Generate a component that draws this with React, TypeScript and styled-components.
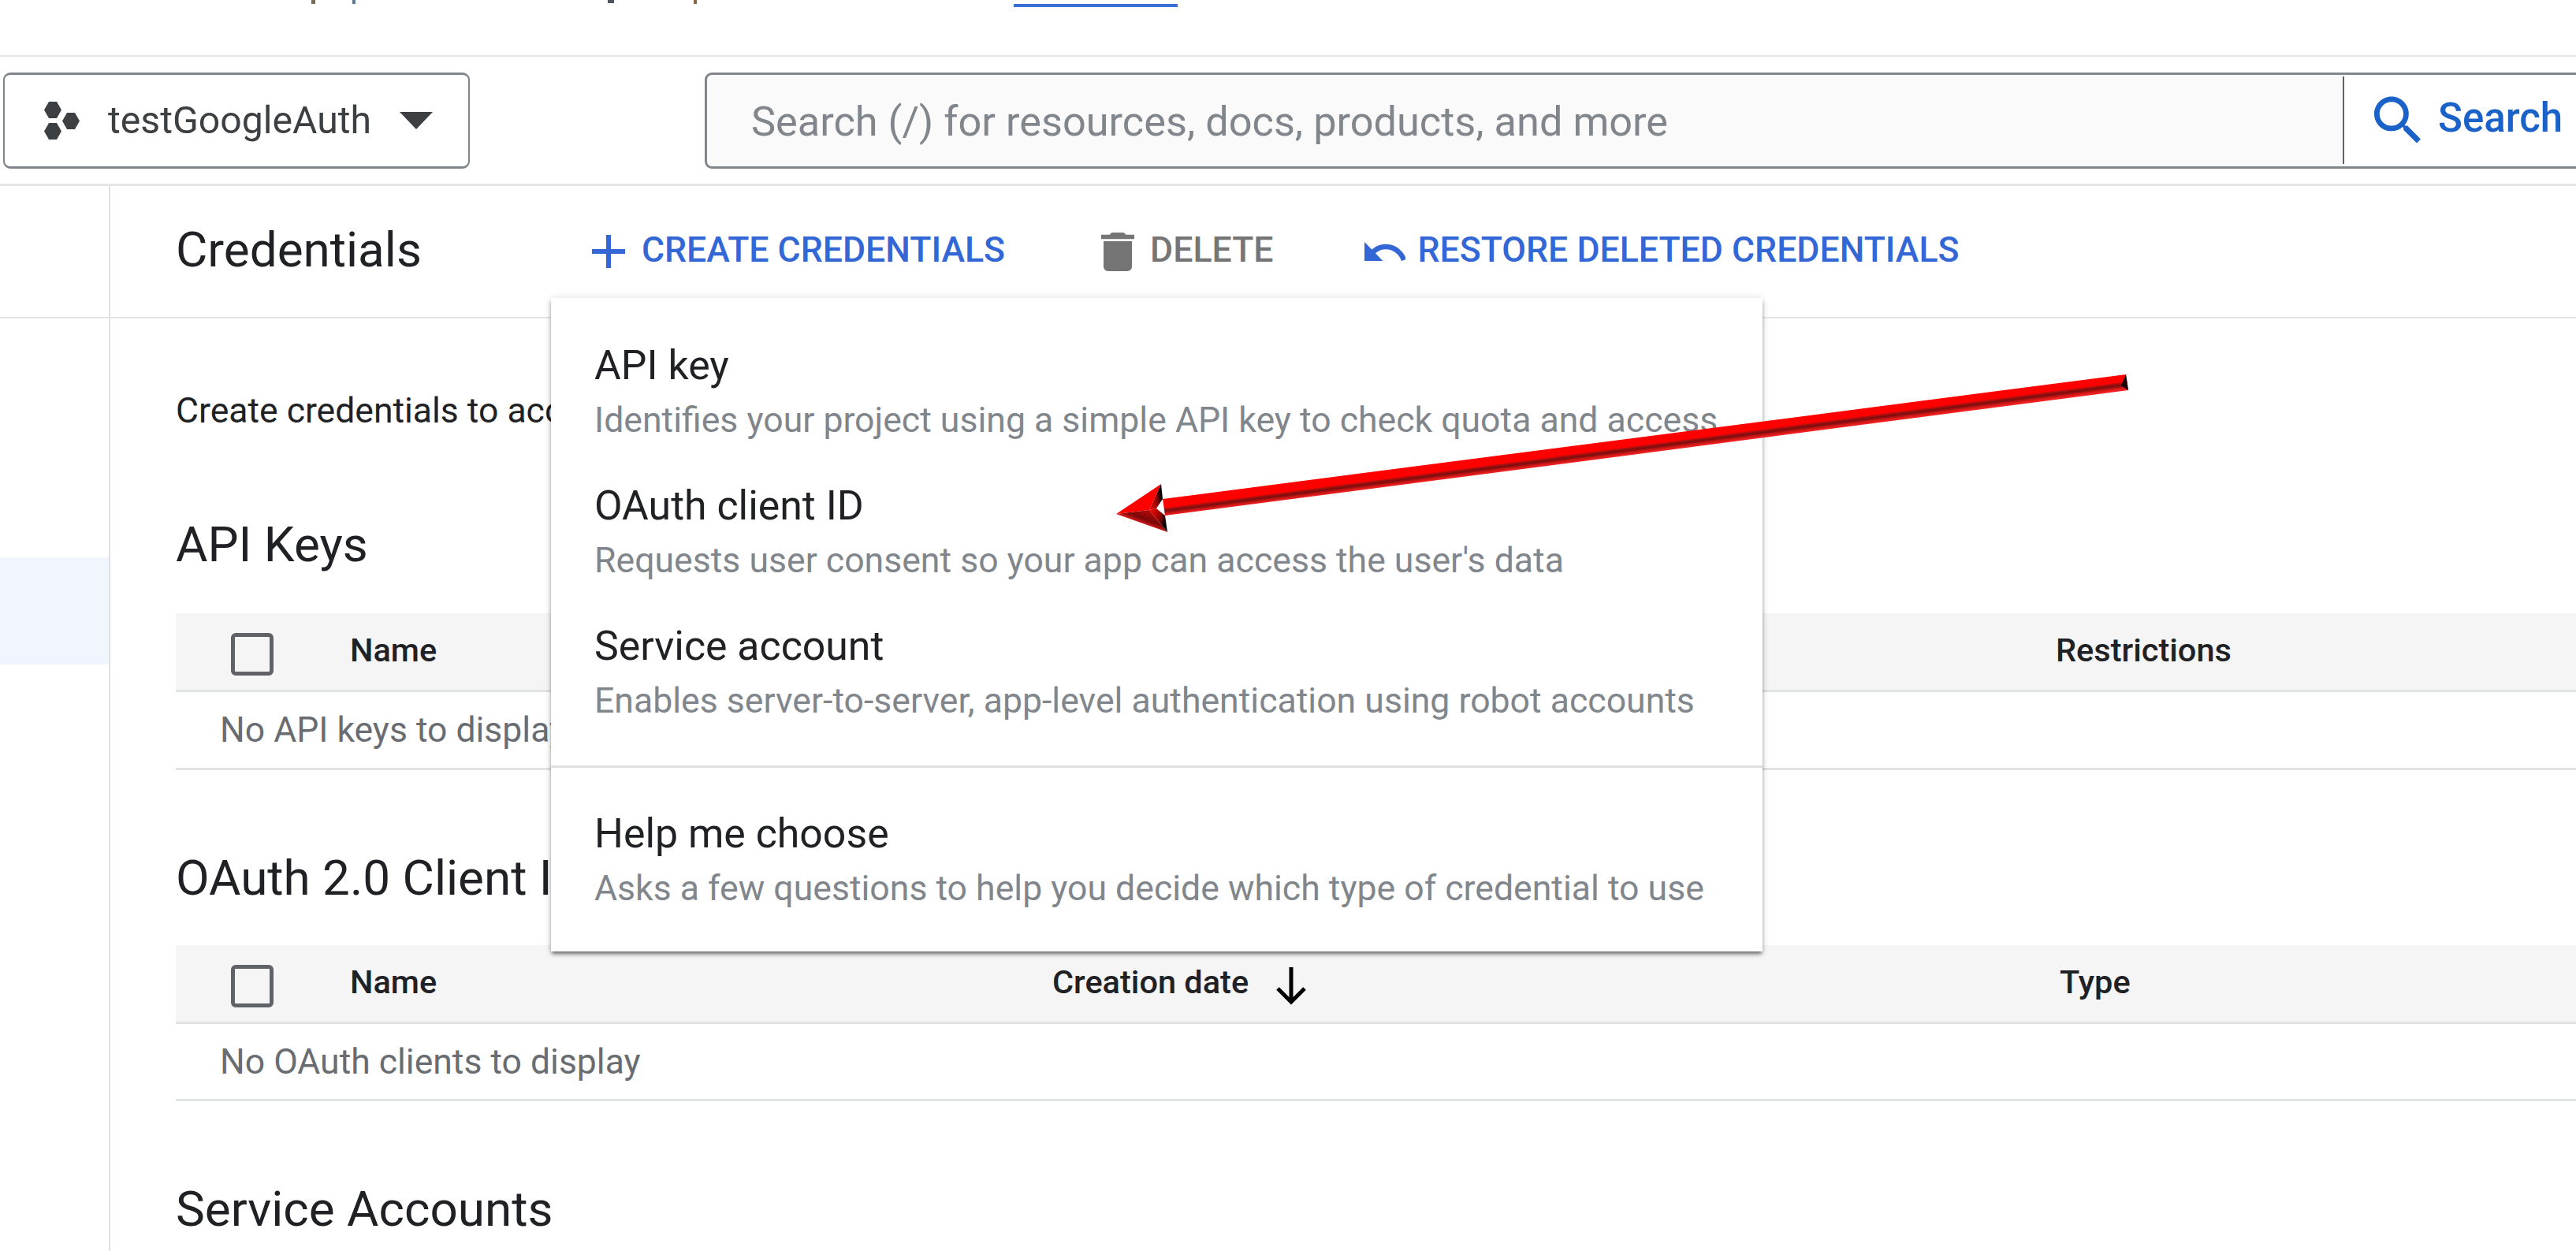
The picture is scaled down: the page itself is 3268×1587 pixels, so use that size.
import React from 'react';
import styled, { createGlobalStyle } from 'styled-components';

const Global = createGlobalStyle`
  html, body { margin: 0; padding: 0; background: #fff; }
  body { font-family: Roboto, "Liberation Sans", sans-serif; }
`;

const Page = styled.div`
  position: relative;
  width: 3268px;
  height: 1587px;
  overflow: hidden;
  background: #fff;
`;

const TopBand = styled.div`
  height: 70px;
  border-bottom: 2px solid #e4e6e8;
`;

const ClippedLine = styled.svg`
  display: block;
`;

const Header = styled.header`
  display: flex;
  align-items: center;
  height: 161px;
  padding-left: 4px;
  gap: 298px;
  border-bottom: 3px solid #e4e6e8;
  box-sizing: content-box;
`;

const ProjectPicker = styled.div`
  display: flex;
  align-items: center;
  box-sizing: border-box;
  width: 592px;
  height: 122px;
  padding-left: 50px;
  border: 2px solid #80868b;
  border-top-width: 3px;
  border-bottom-width: 3px;
  border-radius: 9px;
  color: #3c4043;
`;

const ProjectName = styled.span`
  margin-left: 36px;
  font-size: 48.2px;
  line-height: 60px;
`;

const Caret = styled.svg`
  margin-left: 36px;
`;

const SearchBox = styled.div`
  display: flex;
  align-items: center;
  flex: 1;
  height: 122px;
  margin-right: -12px;
  box-sizing: border-box;
  border: 3px solid #80868b;
  border-radius: 9px;
  background: #fafafa;
`;

const Placeholder = styled.span`
  flex: 1;
  padding: 3px 0 0 56px;
  font-size: 52.3px;
  color: #80868b;
  white-space: nowrap;
`;

const SearchButton = styled.div`
  display: flex;
  align-items: center;
  align-self: stretch;
  box-sizing: border-box;
  flex: none;
  width: 305px;
  margin: 2px 0 3px;
  padding-left: 38px;
  gap: 22px;
  border-left: 2px solid #5f6368;
  background: #fff;
  color: #1a62c8;
  font-size: 51px;
  font-weight: 500;
`;

const SearchLabel = styled.span`
  margin-bottom: 5px;
`;

const Body = styled.div`
  display: flex;
`;

const Sidebar = styled.aside`
  flex: none;
  width: 138px;
  height: 1400px;
  box-sizing: content-box;
  border-right: 2px solid #dfe1e3;
`;

const SidebarHead = styled.div`
  height: 166px;
  border-bottom: 2px solid #e4e6e8;
`;

const SidebarActive = styled.div`
  height: 136px;
  margin-top: 303px;
  background: #f1f5fe;
`;

const Main = styled.main`
  flex: 1;
  min-width: 0;
`;

const Toolbar = styled.div`
  display: flex;
  align-items: center;
  height: 166px;
  padding-left: 83px;
  border-bottom: 2px solid #e4e6e8;
`;

const PageTitle = styled.h1`
  margin: 0 216px 4px 0;
  font-size: 62px;
  font-weight: 400;
  line-height: 70px;
  color: #202124;
`;

const Action = styled.div<{ $color: string; $gap: number; $after: number }>`
  display: flex;
  align-items: center;
  gap: ${p => p.$gap}px;
  margin-right: ${p => p.$after}px;
  color: ${p => p.$color};
  font-size: 44.6px;
  font-weight: 500;
  line-height: 52px;
  white-space: nowrap;
`;

const ActionLabel = styled.span`
  margin-bottom: 5px;
`;

const Content = styled.div`
  padding-left: 83px;
`;

const Intro = styled.p`
  margin: 87px 0 0;
  font-size: 44.5px;
  line-height: 60px;
  color: #202124;
  white-space: nowrap;
`;

const SectionTitle = styled.h2<{ $top: number; $bottom: number }>`
  margin: ${p => p.$top}px 0 ${p => p.$bottom}px;
  font-size: 62px;
  font-weight: 400;
  line-height: 70px;
  color: #202124;
  white-space: nowrap;
`;

const HeadRow = styled.div<{ $cols: string }>`
  display: grid;
  grid-template-columns: ${p => p.$cols};
  align-items: center;
  height: 97px;
  padding-left: 70px;
  border-bottom: 3px solid #e2e3e5;
  background: #f5f5f5;
  box-sizing: content-box;
`;

const Checkbox = styled.div`
  box-sizing: border-box;
  width: 54px;
  height: 54px;
  margin-top: 7px;
  border: 5px solid #5f6368;
  border-radius: 6px;
`;

const HeadCell = styled.div`
  display: flex;
  align-items: center;
  margin-bottom: 4px;
  font-size: 41.5px;
  font-weight: 500;
  color: #202124;
  white-space: nowrap;
`;

const SortIcon = styled.svg`
  margin: 8px 0 0 33px;
`;

const EmptyRow = styled.div<{ $h: number }>`
  display: flex;
  align-items: center;
  height: ${p => p.$h}px;
  padding-left: 56px;
  border-bottom: 3px solid #e2e3e5;
  font-size: 44.5px;
  color: #696d71;
  white-space: nowrap;
`;

const Menu = styled.div`
  position: absolute;
  left: 699px;
  top: 378px;
  width: 1537px;
  box-sizing: border-box;
  padding: 35px 0 22px;
  background: #fff;
  box-shadow: 0 4px 5px -1px rgba(0, 0, 0, 0.55), 0 0 10px rgba(0, 0, 0, 0.12);
`;

const MenuItem = styled.div`
  padding: 18px 40px 22px 55px;
`;

const MenuTitle = styled.div`
  font-size: 51.8px;
  line-height: 66px;
  color: #202124;
`;

const MenuText = styled.div`
  font-size: 44.6px;
  line-height: 72px;
  color: #80868b;
  white-space: nowrap;
`;

const MenuDivider = styled.div`
  height: 3px;
  margin: 24px 0 33px;
  background: #e0e0e0;
`;

const ArrowOverlay = styled.svg`
  position: absolute;
  left: 1410px;
  top: 470px;
`;

const HexIcon = () => (
  <svg width="45" height="50" viewBox="0 0 45 50" fill="#3c4043">
    <polygon points="6,1 16,1 22,11.5 16,22 6,22 0,11.5" />
    <polygon points="6,28 16,28 22,38.5 16,49 6,49 0,38.5" />
    <polygon points="29,15 39,15 45,25.5 39,36 29,36 23,25.5" />
  </svg>
);

const App = () => (
  <Page>
    <Global />
    <TopBand>
      <ClippedLine width="1520" height="12" viewBox="0 0 1520 12">
        <rect x="395" y="0" width="5" height="5" fill="#7a6a55" />
        <rect x="447" y="0" width="4" height="5" fill="#5f7a95" />
        <rect x="771" y="0" width="8" height="4" fill="#4a5560" />
        <rect x="880" y="0" width="4" height="5" fill="#8a6a45" />
        <rect x="1286" y="5" width="208" height="4" fill="#3b6fd8" />
      </ClippedLine>
    </TopBand>

    <Header>
      <ProjectPicker>
        <HexIcon />
        <ProjectName>testGoogleAuth</ProjectName>
        <Caret width="42" height="22" viewBox="0 0 42 22">
          <polygon points="0,0 42,0 21,22" fill="#3c4043" />
        </Caret>
      </ProjectPicker>
      <SearchBox>
        <Placeholder>Search (/) for resources, docs, products, and more</Placeholder>
        <SearchButton>
          <svg width="59" height="60" viewBox="3 3 17.5 17.5" fill="#1a62c8">
            <path d="M15.5 14h-.79l-.28-.27C15.41 12.59 16 11.11 16 9.5 16 5.91 13.09 3 9.5 3S3 5.91 3 9.5 5.91 16 9.5 16c1.61 0 3.09-.59 4.23-1.57l.27.28v.79l5 4.99L20.49 19l-4.99-5zm-6 0C7.01 14 5 11.99 5 9.5S7.01 5 9.5 5 14 7.01 14 9.5 11.99 14 9.5 14z" />
          </svg>
          <SearchLabel>Search</SearchLabel>
        </SearchButton>
      </SearchBox>
    </Header>

    <Body>
      <Sidebar>
        <SidebarHead />
        <SidebarActive />
      </Sidebar>
      <Main>
        <Toolbar>
          <PageTitle>Credentials</PageTitle>
          <Action $color="#3367d6" $gap={21} $after={122}>
            <svg width="42" height="42" viewBox="0 0 42 42" fill="#3367d6">
              <rect x="18" y="0" width="6" height="42" />
              <rect x="0" y="18" width="42" height="6" />
            </svg>
            <ActionLabel>CREATE CREDENTIALS</ActionLabel>
          </Action>
          <Action $color="#757575" $gap={20} $after={115}>
            <svg width="42" height="49" viewBox="5 3 14 18" preserveAspectRatio="none" fill="#757575">
              <path d="M6 19c0 1.1.9 2 2 2h8c1.1 0 2-.9 2-2V7H6v12zM19 4h-3.5l-1-1h-5l-1 1H5v2h14V4z" />
            </svg>
            <ActionLabel>DELETE</ActionLabel>
          </Action>
          <Action $color="#3367d6" $gap={16} $after={0}>
            <svg width="52" height="24" viewBox="2 7 20.1 9" preserveAspectRatio="none" fill="#3367d6">
              <path d="M12.5 8c-2.65 0-5.05.99-6.9 2.6L2 7v9h9l-3.62-3.62c1.39-1.16 3.16-1.88 5.12-1.88 3.54 0 6.55 2.31 7.6 5.5l2.37-.78C21.08 11.03 17.15 8 12.5 8z" />
            </svg>
            <ActionLabel>RESTORE DELETED CREDENTIALS</ActionLabel>
          </Action>
        </Toolbar>

        <Content>
          <Intro>Create credentials to access your enabled APIs</Intro>

          <SectionTitle $top={105} $bottom={52}>API Keys</SectionTitle>
          <HeadRow $cols="151px 891px 1273px 1fr">
            <Checkbox />
            <HeadCell>Name</HeadCell>
            <HeadCell>Creation date</HeadCell>
            <HeadCell>Restrictions</HeadCell>
          </HeadRow>
          <EmptyRow $h={96}>No API keys to display</EmptyRow>

          <SectionTitle $top={102} $bottom={50}>OAuth 2.0 Client IDs</SectionTitle>
          <HeadRow $cols="151px 891px 1278px 1fr">
            <Checkbox />
            <HeadCell>Name</HeadCell>
            <HeadCell>
              Creation date
              <SortIcon width="42" height="50" viewBox="0 0 42 50" fill="none" stroke="#000" strokeWidth="5">
                <path d="M21 2V46M4 29L21 46L38 29" />
              </SortIcon>
            </HeadCell>
            <HeadCell>Type</HeadCell>
          </HeadRow>
          <EmptyRow $h={95}>No OAuth clients to display</EmptyRow>

          <SectionTitle $top={102} $bottom={0}>Service Accounts</SectionTitle>
        </Content>
      </Main>
    </Body>

    <Menu>
      <MenuItem>
        <MenuTitle>API key</MenuTitle>
        <MenuText>Identifies your project using a simple API key to check quota and access</MenuText>
      </MenuItem>
      <MenuItem>
        <MenuTitle>OAuth client ID</MenuTitle>
        <MenuText>Requests user consent so your app can access the user's data</MenuText>
      </MenuItem>
      <MenuItem>
        <MenuTitle>Service account</MenuTitle>
        <MenuText>Enables server-to-server, app-level authentication using robot accounts</MenuText>
      </MenuItem>
      <MenuDivider />
      <MenuItem>
        <MenuTitle>Help me choose</MenuTitle>
        <MenuText>Asks a few questions to help you decide which type of credential to use</MenuText>
      </MenuItem>
    </Menu>

    <ArrowOverlay width="1295" height="210" viewBox="1410 470 1295 210">
      <defs>
        <linearGradient id="shaft" gradientUnits="userSpaceOnUse" x1="2000" y1="565.3" x2="2002.6" y2="585.1">
          <stop offset="0" stopColor="#ff0000" />
          <stop offset="0.5" stopColor="#ff0000" />
          <stop offset="0.58" stopColor="#a81010" />
          <stop offset="0.72" stopColor="#7c0c0c" />
          <stop offset="0.86" stopColor="#c41515" />
          <stop offset="1" stopColor="#f42020" />
        </linearGradient>
        <linearGradient id="lowerLeft" gradientUnits="userSpaceOnUse" x1="1450" y1="648" x2="1444" y2="664">
          <stop offset="0" stopColor="#a80808" />
          <stop offset="0.55" stopColor="#7a0808" />
          <stop offset="1" stopColor="#f02020" />
        </linearGradient>
        <linearGradient id="upperRight" gradientUnits="userSpaceOnUse" x1="1461" y1="640" x2="1475" y2="637">
          <stop offset="0" stopColor="#d00606" />
          <stop offset="0.55" stopColor="#8a0505" />
          <stop offset="1" stopColor="#000000" />
        </linearGradient>
        <linearGradient id="lowerRight" gradientUnits="userSpaceOnUse" x1="1460" y1="648" x2="1481" y2="654">
          <stop offset="0" stopColor="#f00000" />
          <stop offset="0.6" stopColor="#900505" />
          <stop offset="1" stopColor="#000000" />
        </linearGradient>
      </defs>
      <polygon points="1475,633 2697,475 2700,495 1478,654" fill="url(#shaft)" />
      <polygon points="2697,475 2700,495 2691,489" fill="#1a0000" />
      <polygon points="1416,652 1473,614 1458,647" fill="#ff0000" />
      <polygon points="1473,614 1475,633 1467,645 1458,647" fill="url(#upperRight)" />
      <polygon points="1416,652 1458,647 1481,675" fill="url(#lowerLeft)" />
      <polygon points="1458,647 1467,645 1478,654 1481,675" fill="url(#lowerRight)" />
    </ArrowOverlay>
  </Page>
);

export default App;
